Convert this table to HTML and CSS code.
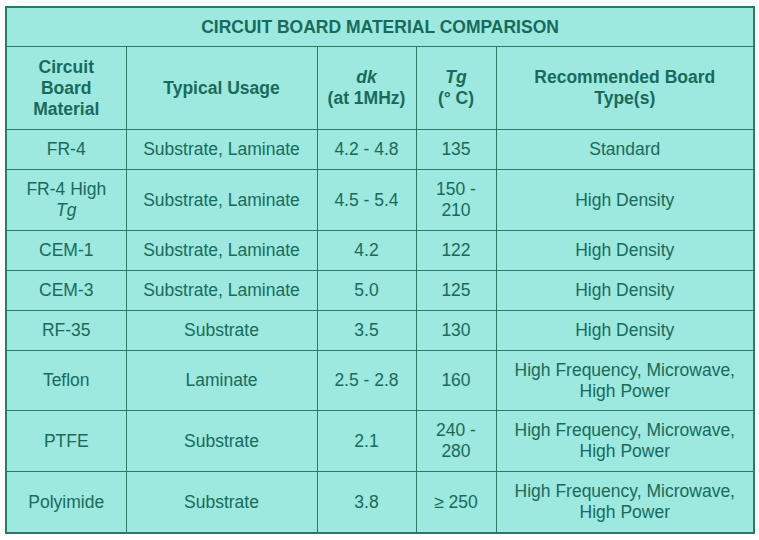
FILE: index.html
```html
<!DOCTYPE html>
<html>
<head>
<meta charset="utf-8">
<link rel="stylesheet" href="styles.css">
</head>
<body>
<table class="cmp">
  <colgroup>
    <col class="c1"><col class="c2"><col class="c3"><col class="c4"><col class="c5">
  </colgroup>
  <thead>
    <tr class="title"><th colspan="5">CIRCUIT BOARD MATERIAL COMPARISON</th></tr>
    <tr class="head">
      <th>Circuit<br>Board<br>Material</th>
      <th>Typical Usage</th>
      <th><i>dk</i><br>(at 1MHz)</th>
      <th><i>Tg</i><br>(° C)</th>
      <th>Recommended Board<br>Type(s)</th>
    </tr>
  </thead>
  <tbody>
    <tr class="one"><td>FR-4</td><td>Substrate, Laminate</td><td>4.2 - 4.8</td><td>135</td><td>Standard</td></tr>
    <tr class="two"><td>FR-4 High<br><i>Tg</i></td><td>Substrate, Laminate</td><td>4.5 - 5.4</td><td>150 -<br>210</td><td>High Density</td></tr>
    <tr class="one"><td>CEM-1</td><td>Substrate, Laminate</td><td>4.2</td><td>122</td><td>High Density</td></tr>
    <tr class="one"><td>CEM-3</td><td>Substrate, Laminate</td><td>5.0</td><td>125</td><td>High Density</td></tr>
    <tr class="one"><td>RF-35</td><td>Substrate</td><td>3.5</td><td>130</td><td>High Density</td></tr>
    <tr class="two b"><td>Teflon</td><td>Laminate</td><td>2.5 - 2.8</td><td>160</td><td>High Frequency, Microwave,<br>High Power</td></tr>
    <tr class="two"><td>PTFE</td><td>Substrate</td><td>2.1</td><td>240 -<br>280</td><td>High Frequency, Microwave,<br>High Power</td></tr>
    <tr class="two"><td>Polyimide</td><td>Substrate</td><td>3.8</td><td>≥ 250</td><td>High Frequency, Microwave,<br>High Power</td></tr>
  </tbody>
</table>
</body>
</html>
```
FILE: styles.css
```css
html, body {
  margin: 0;
  padding: 0;
  background: #ffffff;
}
body {
  padding: 6px 0 0 5px;
  font-family: "Liberation Sans", Arial, sans-serif;
}
.cmp {
  width: 748px;
  border-collapse: collapse;
  table-layout: fixed;
  background: #9de8df;
  color: #186b5a;
  font-size: 17.5px;
  line-height: 21px;
  border: 2px solid #2b7a68;
}
.c1 { width: 120px; }
.c2 { width: 191px; }
.c3 { width: 99px; }
.c4 { width: 80px; }
.c5 { width: 258px; }
.cmp th, .cmp td {
  border: 1px solid #2b7a68;
  text-align: center;
  vertical-align: middle;
  padding: 0 2px;
}
.cmp th { font-weight: bold; }
.title th { height: 38px; }
.head th { height: 82px; }
.one td { height: 39px; }
.two td { height: 60px; }
.two.b td { height: 59px; }
```
